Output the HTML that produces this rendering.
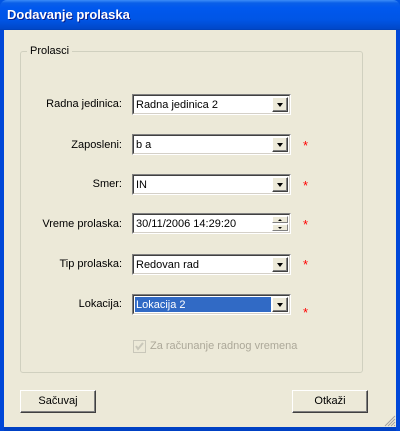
<!DOCTYPE html>
<html><head><style>
*{margin:0;padding:0;box-sizing:border-box}
body{width:400px;height:431px;overflow:hidden;background:#0054E3;font-family:"Liberation Sans",sans-serif;font-size:11px;position:relative}
.title{position:absolute;left:0;top:0;width:400px;height:30px;border-radius:7px 7px 0 0;background:linear-gradient(#3C8CF8 0,#0A5FE8 3px,#0058EE 8px,#0055E5 20px,#0047C8 29px,#003DB0 30px)}
.title span{position:absolute;left:7px;top:7px;color:#fff;font-weight:bold;font-size:13px;text-shadow:1px 1px #0A1E8C}
.client{position:absolute;left:4px;top:30px;width:392px;height:397px;background:#ECE9D8}
.bottom{position:absolute;left:0;top:427px;width:400px;height:4px;background:#0041C4}
.grp{position:absolute;left:20px;top:51px;width:343px;height:322px;border:1px solid #D0D0BF;border-radius:3px}
.leg{position:absolute;left:27px;top:45px;background:#ECE9D8;padding:0 3px;font-size:11px}
.lbl{position:absolute;right:278px;font-size:11px;color:#000;text-align:right;white-space:nowrap}
.cb{position:absolute;left:132px;width:159px;height:21px;background:#fff;border:1px solid;border-color:#808080 #fff #fff #808080}
.cb:before{content:"";position:absolute;left:0;top:0;right:0;bottom:0;border:1px solid;border-color:#404040 #D4D0C8 #D4D0C8 #404040}
.cb .t{position:absolute;left:3px;top:4px;font-size:11px;white-space:nowrap}
.btn{position:absolute;right:2px;top:2px;width:16px;height:15px;background:#ECE9D8;border:1px solid;border-color:#fff #404040 #404040 #fff;box-shadow:inset -1px -1px #808080}
.btn:after{content:"";position:absolute;left:4px;top:5px;border:3.5px solid transparent;border-top:4px solid #000;border-bottom:0}
.sel{position:absolute;left:2px;top:2px;right:19px;bottom:2px;background:#316AC5;color:#fff;padding:2px 1px;font-size:11px}
.ast{position:absolute;left:303px;color:#f00;font-size:13px}
.pb{position:absolute;width:76px;height:23px;background:#ECE9D8;border:1px solid;border-color:#fff #404040 #404040 #fff;box-shadow:inset -1px -1px #808080;text-align:center;line-height:20px;font-size:11px}
</style></head><body>
<div class="title"><span>Dodavanje prolaska</span></div>
<div class="client"></div>
<div class="bottom"></div>
<div style="position:absolute;left:0;top:30px;width:4px;height:401px;background:#0047D8"></div>
<div style="position:absolute;right:0;top:30px;width:4px;height:401px;background:#0047D8"></div>
<div class="grp"></div>
<div class="leg">Prolasci</div>

<div class="lbl" style="top:98px">Radna jedinica:</div>
<div class="cb" style="top:94px"><div class="t">Radna jedinica 2</div><div class="btn"></div></div>

<div class="lbl" style="top:139px">Zaposleni:</div>
<div class="cb" style="top:134px"><div class="t">b a</div><div class="btn"></div></div>
<div class="ast" style="top:138px">*</div>

<div class="lbl" style="top:178px">Smer:</div>
<div class="cb" style="top:174px"><div class="t">IN</div><div class="btn"></div></div>
<div class="ast" style="top:178px">*</div>

<div class="lbl" style="top:218px">Vreme prolaska:</div>
<div class="cb" style="top:213px"><div class="t">30/11/2006 14:29:20</div>
<div style="position:absolute;right:2px;top:2px;width:16px;height:7px;background:#ECE9D8;border:1px solid;border-color:#fff #808080 #808080 #fff"><div style="position:absolute;left:5px;top:2px;border:2px solid transparent;border-bottom:2px solid #000;border-top:0"></div></div>
<div style="position:absolute;right:2px;top:10px;width:16px;height:7px;background:#ECE9D8;border:1px solid;border-color:#fff #808080 #808080 #fff"><div style="position:absolute;left:5px;top:2px;border:2px solid transparent;border-top:2px solid #000;border-bottom:0"></div></div>
</div>
<div class="ast" style="top:217px">*</div>

<div class="lbl" style="top:258px">Tip prolaska:</div>
<div class="cb" style="top:254px"><div class="t">Redovan rad</div><div class="btn"></div></div>
<div class="ast" style="top:257px">*</div>

<div class="lbl" style="top:298px">Lokacija:</div>
<div class="cb" style="top:294px"><div class="sel">Lokacija 2</div><div class="btn"></div></div>
<div class="ast" style="top:305px">*</div>

<div style="position:absolute;left:133px;top:340px;width:13px;height:13px;border:1px solid #C9C7BA;background:#ECE9D8"><svg width="11" height="11" style="position:absolute;left:0;top:0"><path d="M2 5 L4 8 L9 2" stroke="#C9C7BA" stroke-width="2" fill="none"/></svg></div>
<div style="position:absolute;left:150px;top:340px;color:#ACA899;font-size:11px">Za računanje radnog vremena</div>

<div class="pb" style="left:20px;top:390px">Sačuvaj</div>
<div class="pb" style="left:292px;top:390px">Otkaži</div>
<svg width="12" height="12" style="position:absolute;left:384px;top:415px"><path d="M11 1L1 11M11 4L4 11M11 7L7 11M11 10L10 11" stroke="#A0A0A0" stroke-width="1"/></svg>
</body></html>
